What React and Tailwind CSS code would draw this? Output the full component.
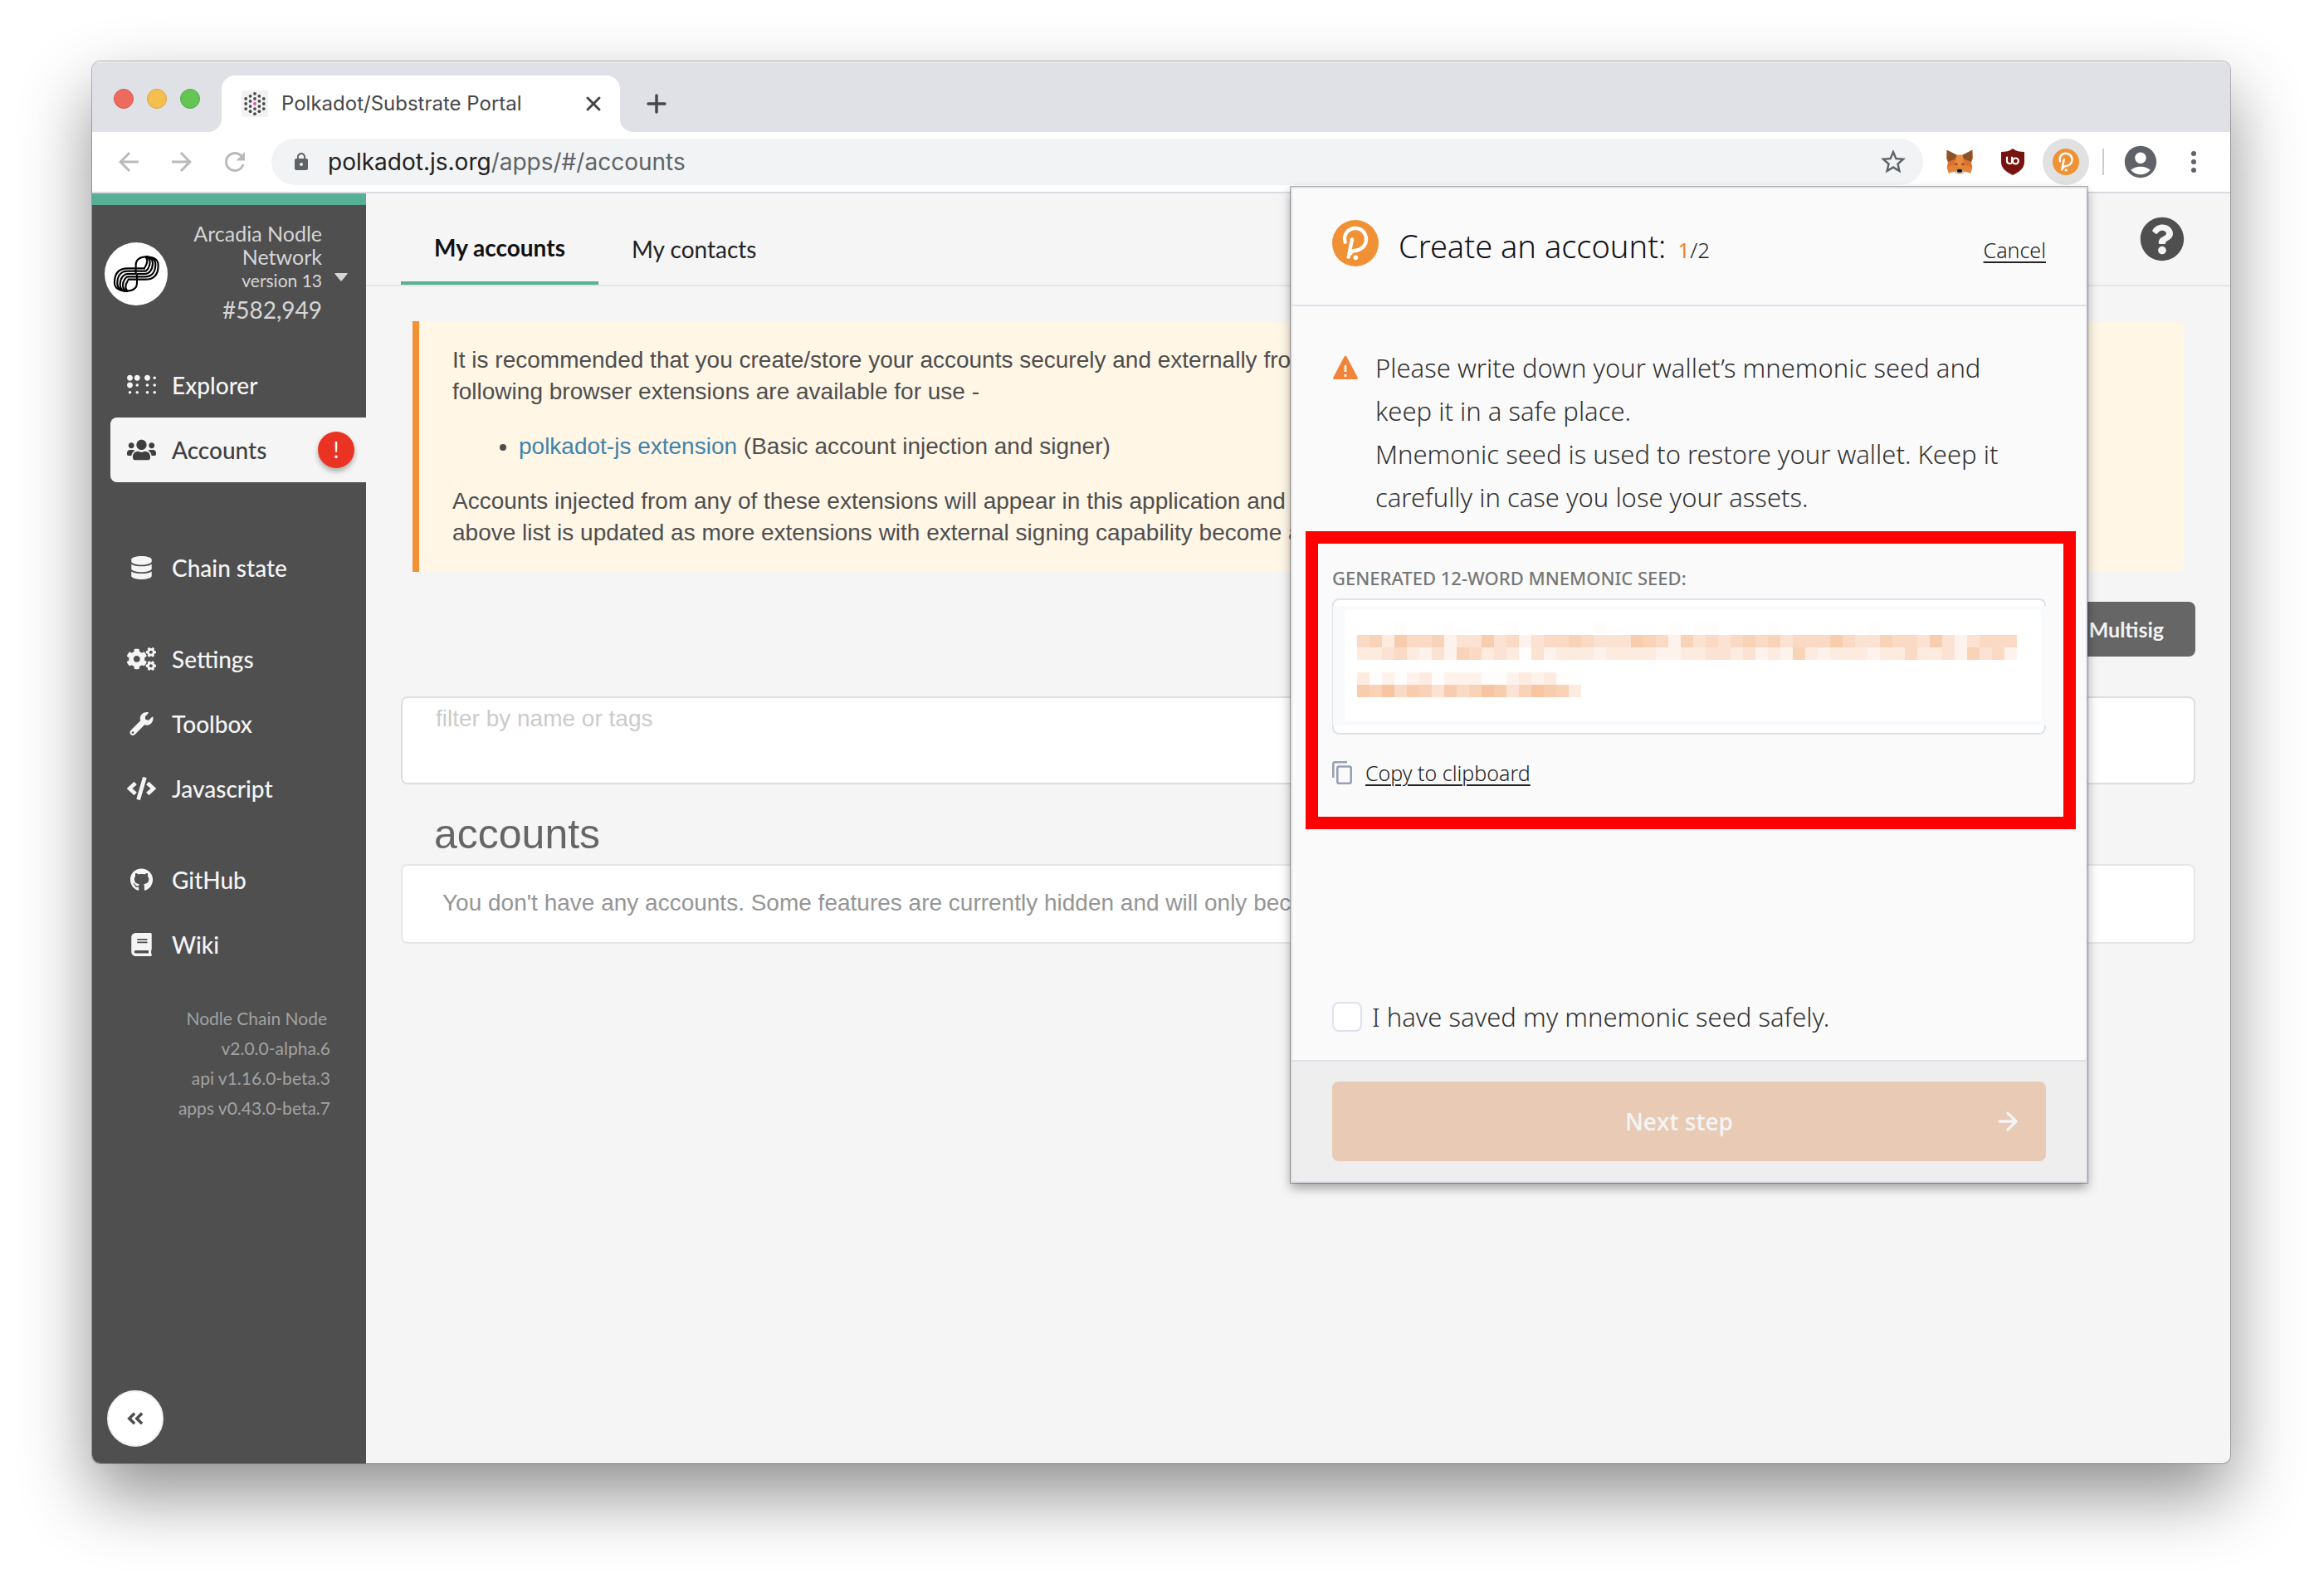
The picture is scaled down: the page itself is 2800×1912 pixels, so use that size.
import React from "react";
import {
  FaBraille,
  FaUsers,
  FaDatabase,
  FaCogs,
  FaWrench,
  FaCode,
  FaGithub,
  FaBook,
  FaQuestionCircle,
  FaPlus,
} from "react-icons/fa";
import { MdArrowBack, MdArrowForward, MdRefresh, MdLock, MdStarBorder, MdAccountCircle } from "react-icons/md";

function PolkadotLogo({ className }) {
  return (
    <svg viewBox="27 27 168 168" className={className} aria-hidden="true">
      <circle cx="111" cy="111" r="84" fill="#f19135" />
      <g fill="none" stroke="#fff" strokeWidth="13" strokeLinecap="round" strokeLinejoin="round">
        <path d="M74 107C66 78 86 57 111 57C134 57 150 75 150 97C150 121 132 136 108 138C100 139 96 141 94 148" />
        <path d="M99 97L86 161" />
      </g>
      <circle cx="112" cy="163" r="8.5" fill="#fff" />
    </svg>
  );
}

const LOOPS = [0, 1, 2, 3, 4].map((i) => {
  const y = 105 + i * 10;
  const x = 48 + i * 10;
  return `M127 ${y}H95C${x + 14} ${y} ${x} ${y + 18 - i * 2} ${x} ${156 + i * 4}C${x} 178 ${x + 14 - i * 2} 187 95 187`;
});

function NodleLogo({ className }) {
  const half = (
    <>
      {LOOPS.map((d) => (
        <path key={d} d={d} />
      ))}
      <path d="M88 187C115 188 129 176 129 158V127" />
    </>
  );
  return (
    <svg viewBox="12 11 228 228" className={className} aria-hidden="true">
      <circle cx="126" cy="125" r="114" fill="#fff" />
      <g fill="none" stroke="#000" strokeWidth="6.4">
        {half}
        <g transform="rotate(180 127 125)">{half}</g>
      </g>
    </svg>
  );
}

function Favicon({ className }) {
  const cols = [3, 4, 5, 4, 3];
  return (
    <svg viewBox="0 0 32 32" className={className} aria-hidden="true">
      <rect width="32" height="32" fill="#f2f2f2" />
      {cols.map((n, c) =>
        Array.from({ length: n }, (_, r) => {
          const centre = c === 2 && r === 2;
          return (
            <circle
              key={`${c}-${r}`}
              cx={16 + (c - 2) * 5.4}
              cy={16 + (r - (n - 1) / 2) * 6.1}
              r={1.9}
              fill={centre ? "#d64ca8" : "#4a4a4a"}
            />
          );
        })
      )}
    </svg>
  );
}

function Fox({ className }) {
  return (
    <svg viewBox="0 0 96 90" className={className} aria-hidden="true">
      <path d="M2 2L38 20H58L94 2L96 32L90 48L94 66L88 86L68 80L58 88H38L28 80L8 86L2 66L6 48L0 32Z" fill="#e5823a" />
      <path d="M2 2L38 20L32 36L6 45L2 30Z" fill="#8b532b" />
      <path d="M94 2L58 20L64 36L90 45L94 30Z" fill="#8b532b" />
      <path d="M38 20H58L60 62H36Z" fill="#ea8d3c" />
      <path d="M6 45L32 36L28 56L4 64Z" fill="#d9722f" />
      <path d="M90 45L64 36L68 56L92 64Z" fill="#d9722f" />
      <path d="M26 52L42 48L40 60Z" fill="#c9612a" />
      <path d="M70 52L54 48L56 60Z" fill="#c9612a" />
      <path d="M30 52L38 53L37 58Z" fill="#2f343c" />
      <path d="M66 52L58 53L59 58Z" fill="#2f343c" />
      <path d="M36 76L30 82L40 89H56L66 82L60 76Z" fill="#d2c4b6" />
      <path d="M41 72H55L58 79L54 83H42L38 79Z" fill="#161616" />
    </svg>
  );
}

function Shield({ className }) {
  return (
    <svg viewBox="0 0 84 96" className={className} aria-hidden="true">
      <path d="M42 0C30 9 16 12 0 12V48C0 72 18 84 42 96C66 84 84 72 84 48V12C68 12 54 9 42 0Z" fill="#78140f" />
      <g fill="none" stroke="#fff" strokeWidth="6.5">
        <path d="M21 29V45C21 55 35 57 39 50V29" />
        <circle cx="52" cy="45" r="10.5" />
      </g>
    </svg>
  );
}

function DoubleChevron({ className }) {
  return (
    <svg viewBox="0 0 24 20" className={className} fill="none" stroke="currentColor" strokeWidth="4" aria-hidden="true">
      <path d="M11 3L4 10L11 17M21 3L14 10L21 17" />
    </svg>
  );
}

const MENU = [
  [
    { label: "Explorer", Icon: FaBraille },
    { label: "Accounts", Icon: FaUsers, active: true },
  ],
  [{ label: "Chain state", Icon: FaDatabase }],
  [
    { label: "Settings", Icon: FaCogs },
    { label: "Toolbox", Icon: FaWrench },
    { label: "Javascript", Icon: FaCode },
  ],
  [
    { label: "GitHub", Icon: FaGithub },
    { label: "Wiki", Icon: FaBook },
  ],
];
const GROUP_GAPS = ["mt-8", "mt-16", "mt-8", "mt-8"];

function Sidebar() {
  return (
    <aside className="flex w-[330px] shrink-0 flex-col border-t-[14px] border-[#55b095] bg-[#4f4f4f] font-[Lato,sans-serif] text-[#f5f5f5]">
      <button type="button" className="mt-5 flex items-center pl-[15px] text-right text-[#d6d6d6]">
        <NodleLogo className="size-[76px] shrink-0" />
        <span className="flex-1 pl-6 text-[25px] leading-7">
          <span className="block">Arcadia Nodle Network</span>
          <span className="block text-[21px] leading-[30px]">version 13</span>
          <span className="block text-[28px] leading-10">#582,949</span>
        </span>
        <svg viewBox="0 0 16 10" className="mt-2 mr-[22px] ml-[15px] h-[10px] w-4" fill="currentColor" aria-hidden="true">
          <path d="M1 0H15Q16 0 15.500 1L9 9Q8 10 7 9L0.500 1Q0 0 1 0Z" />
        </svg>
      </button>
      <nav className="flex flex-col">
        {MENU.map((group, g) => (
          <ul key={g} className={GROUP_GAPS[g]}>
            {group.map(({ label, Icon, active }) => (
              <li key={label} className="pl-[22px]">
                <a
                  href="#/accounts"
                  className={
                    active
                      ? "flex h-[78px] items-center gap-[19px] rounded-l-lg bg-[#f5f5f5] pr-[14px] pl-5 text-[28px] text-[#3f3f3f]"
                      : "flex h-[78px] items-center gap-[19px] pr-[14px] pl-5 text-[28px]"
                  }
                >
                  <Icon className="h-7 w-[35px] shrink-0" />
                  <span className="flex-1 font-medium">{label}</span>
                  {active && (
                    <span className="flex size-11 items-center justify-center rounded-full bg-[#ea3323] text-[26px] text-white shadow-[0_4px_6px_rgba(0,0,0,0.3)]">
                      !
                    </span>
                  )}
                </a>
              </li>
            ))}
          </ul>
        ))}
      </nav>
      <div className="mt-8 pr-[43px] text-right text-[21px] leading-9 text-[#a2a2a2]">
        <p className="pr-1">Nodle Chain Node</p>
        <p>v2.0.0-alpha.6</p>
        <p>api v1.16.0-beta.3</p>
        <p>apps v0.43.0-beta.7</p>
      </div>
      <button
        type="button"
        aria-label="Collapse sidebar"
        className="mt-auto mb-5 ml-[18px] flex size-[68px] items-center justify-center rounded-full border-2 border-[#f0f0f0] bg-white text-[#4f4f4f]"
      >
        <DoubleChevron className="h-[18px] w-[22px]" />
      </button>
    </aside>
  );
}

function TabStrip() {
  return (
    <div className="flex h-[85px] items-end border-t-2 border-[#eaebee] bg-[#dfe1e6]">
      <div className="flex h-[83px] w-[156px] items-center gap-4 pt-0.5 pl-[26px]">
        <button type="button" aria-label="Close" className="size-6 rounded-full border border-[#d8574d] bg-[#ed6a5e]" />
        <button type="button" aria-label="Minimize" className="size-6 rounded-full border border-[#dda43c] bg-[#f5bf4f]" />
        <button type="button" aria-label="Zoom" className="size-6 rounded-full border border-[#52ae3f] bg-[#62c554]" />
      </div>
      <div className="relative flex h-[68px] w-[480px] items-center rounded-t-2xl bg-white pr-[22px] pl-6">
        <span className="absolute bottom-0 -left-4 size-4 bg-white">
          <span className="block size-4 rounded-br-2xl bg-[#dfe1e6]" />
        </span>
        <span className="absolute -right-4 bottom-0 size-4 bg-white">
          <span className="block size-4 rounded-bl-2xl bg-[#dfe1e6]" />
        </span>
        <Favicon className="size-8" />
        <span className="flex-1 pl-4 text-[24px] text-[#45474b]">Polkadot/Substrate Portal</span>
        <button type="button" aria-label="Close tab">
          <svg viewBox="0 0 20 20" className="size-5" stroke="#45474b" strokeWidth="3" strokeLinecap="round" aria-hidden="true">
            <path d="M3 3L17 17M17 3L3 17" />
          </svg>
        </button>
      </div>
      <button type="button" aria-label="New tab" className="flex h-[68px] items-center pl-8">
        <svg viewBox="0 0 24 24" className="size-6" stroke="#45474b" strokeWidth="3.500" strokeLinecap="round" aria-hidden="true">
          <path d="M12 2V22M2 12H22" />
        </svg>
      </button>
    </div>
  );
}

function Toolbar() {
  return (
    <div className="flex h-[74px] items-center border-b-2 border-[#d9dbe1] bg-white">
      <div className="flex items-center gap-7 pl-[26px] text-[#b9babd]">
        <button type="button" aria-label="Back">
          <MdArrowBack className="size-9" />
        </button>
        <button type="button" aria-label="Forward">
          <MdArrowForward className="size-9" />
        </button>
        <button type="button" aria-label="Reload">
          <MdRefresh className="size-9" />
        </button>
      </div>
      <div className="ml-[26px] flex h-14 flex-1 items-center rounded-full bg-[#f1f3f4] pr-[18px] pl-6">
        <MdLock className="size-6 text-[#5f6368]" />
        <p className="flex-1 pl-5 text-[28px] text-[#5f6368]">
          <span className="text-[#202124]">polkadot.js.org</span>/apps/#/accounts
        </p>
        <button type="button" aria-label="Bookmark">
          <MdStarBorder className="size-9 text-[#5f6368]" />
        </button>
      </div>
      <div className="flex items-center pl-7">
        <Fox className="h-[30px] w-8" />
        <Shield className="ml-[34px] h-8 w-7" />
        <button type="button" aria-label="Polkadot extension" className="ml-[22px] flex size-14 items-center justify-center rounded-full bg-[#e1e1e1]">
          <PolkadotLogo className="size-8" />
        </button>
        <span className="ml-4 h-8 w-0.5 bg-[#cccdd0]" />
        <button type="button" aria-label="Profile" className="ml-[21px]">
          <MdAccountCircle className="size-[46px] text-[#5f6368]" />
        </button>
        <button type="button" aria-label="Menu" className="mr-[41px] ml-[38px] flex flex-col gap-1">
          <span className="size-[6px] rounded-full bg-[#5f6368]" />
          <span className="size-[6px] rounded-full bg-[#5f6368]" />
          <span className="size-[6px] rounded-full bg-[#5f6368]" />
        </button>
      </div>
    </div>
  );
}

function AccountsPage() {
  return (
    <main className="min-w-0 flex-1 font-['Liberation_Sans',Arial,sans-serif] text-[28px] leading-[38px]">
      <header className="flex h-28 items-stretch border-b-2 border-[#e5e5e5] pl-[42px] font-[Lato,sans-serif] text-[#222]">
        <a href="#/accounts" className="flex items-center border-b-4 border-[#55b095] px-10 pt-6 font-bold text-[#111]">
          My accounts
        </a>
        <a href="#/contacts" className="flex items-center px-10 pt-6">
          My contacts
        </a>
        <button type="button" aria-label="Help" className="mr-[55px] ml-auto">
          <FaQuestionCircle className="size-[54px] text-[#4f4f4f]" />
        </button>
      </header>
      <div className="px-[42px] pt-[42px]">
        <article className="mx-[14px] flex flex-col gap-7 rounded-r-md border-l-8 border-[#f19135] bg-[#fff6e6] px-10 py-7 text-[#4e4e4e]">
          <p>
            It is recommended that you create/store your accounts securely and externally from the app. On Chrome the
            <br />
            following browser extensions are available for use -
          </p>
          <ul className="list-disc pl-20">
            <li>
              <a href="#extension" className="text-[#4183a9]">
                polkadot-js extension
              </a>{" "}
              (Basic account injection and signer)
            </li>
          </ul>
          <p>
            Accounts injected from any of these extensions will appear in this application and be available for use. The
            <br />
            above list is updated as more extensions with external signing capability become available.
          </p>
        </article>
        <div className="mt-9 flex justify-end">
          <button
            type="button"
            className="flex h-[66px] items-center gap-4 rounded-lg bg-[#666] px-[38px] font-[Lato,sans-serif] text-[25px] font-bold text-[#f5f5f5]"
          >
            <FaPlus className="size-6" />
            Multisig
          </button>
        </div>
        <div className="mt-12 h-[106px] rounded-lg border-2 border-[#dedede] bg-white px-10 pt-[6px]">
          <input
            type="text"
            aria-label="filter by name or tags"
            placeholder="filter by name or tags"
            className="block w-full bg-transparent text-[28px] leading-[38px] outline-none placeholder:text-[#cbcbcb]"
          />
        </div>
        <h1 className="mt-[30px] mb-[6px] pl-10 text-[50px] leading-[60px] text-[#666]">accounts</h1>
        <p className="rounded-lg border-2 border-[#e6e6e6] bg-white px-12 pt-[26px] pb-7 text-[#959595]">
          You don't have any accounts. Some features are currently hidden and will only become available once you have accounts.
        </p>
      </div>
    </main>
  );
}

/* Obscured seed phrase: one letter per cell, a = lightest, h = strongest; "." is blank. */
const SHADES = { a: "#fffdfb", b: "#fef2ec", c: "#fdebe0", d: "#fbe2d2", e: "#fadac4", f: "#f9d3b8", g: "#f8cdae", h: "#f8c5a2" };
const MOSAIC = [
  "...a...a....a......a.....a.aa....a.......a...........",
  "efcgeefbddgdebdeefedddgfebfdedefefdeeegeddfeedgdbdeee",
  "ccdecbdbfecdcadbcccbccccbbccddcdbcbfcbcccbcceccdbfdeb",
  "",
  "cababcabbbaabcbca.",
  "gfhegfdgefhgdfhgfc",
];

function SeedMosaic({ className }) {
  return (
    <svg viewBox="0 0 795 90" className={className} role="img" aria-label="Mnemonic seed, obscured" shapeRendering="crispEdges">
      {MOSAIC.map((row, y) =>
        [...row].map((k, x) =>
          SHADES[k] ? <rect key={`${x}-${y}`} x={x * 15} y={y * 15} width="15" height="15" fill={SHADES[k]} /> : null
        )
      )}
    </svg>
  );
}

function ExtensionPopup() {
  return (
    <section
      aria-label="Create an account"
      className="absolute top-[151px] right-[172px] flex h-[1200px] w-[960px] flex-col border-2 border-[#dfe1ea] bg-[#fafafa] font-['Noto_Sans','Open_Sans',sans-serif] font-light text-[#222] shadow-[0_0_0_1px_rgba(0,0,0,0.3),0_6px_12px_rgba(0,0,0,0.35)]"
    >
      <header className="flex h-[142px] shrink-0 items-start gap-6 border-b-2 border-[#dfe1ea] px-12 pt-[38px]">
        <PolkadotLogo className="size-14 shrink-0" />
        <div className="flex flex-1 items-baseline gap-[14px] leading-[62px]">
          <h2 className="text-[38px] text-[#111216]">Create an account:</h2>
          <p className="text-[26px]">
            <span className="font-normal text-[#f1843a]">1</span>/2
          </p>
          <a href="#cancel" className="ml-auto text-[25px] underline decoration-2 underline-offset-4">
            Cancel
          </a>
        </div>
      </header>
      <div className="flex flex-1 flex-col">
        <div className="flex gap-5 pt-12 pr-12 pl-12 text-[31px] leading-[52px] text-[#333]">
          <svg viewBox="0 0 32 30" className="mt-[11px] h-[30px] w-8 shrink-0" aria-hidden="true">
            <path d="M14.400 2Q16 -0.500 17.600 2L30.600 26.500Q31.600 29 29 29H3Q0.400 29 1.400 26.500Z" fill="#f1843a" />
            <path d="M16 12V20M16 23V26" stroke="#fff" strokeWidth="2.600" />
          </svg>
          <p className="max-w-[770px]">
            Please write down your wallet’s mnemonic seed and keep it in a safe place.
            <br />
            Mnemonic seed is used to restore your wallet. Keep it carefully in case you lose your assets.
          </p>
        </div>
        <div className="mt-[15px] mr-3 ml-4 border-[15px] border-[#ff0000] pt-[26px] pr-[21px] pb-[35px] pl-[17px]">
          <h3 className="text-[22px] leading-[30px] font-medium text-[#777]">GENERATED 12-WORD MNEMONIC SEED:</h3>
          <div className="relative mt-[10px] h-[164px] rounded-lg border-2 border-[#dfe1ec] bg-white">
            <div className="absolute -right-[10px] -left-px top-[7px] h-[144px] border-x-[14px] border-y-[5px] border-[#f9fafc] bg-white pt-[15px] pl-[15px]">
              <SeedMosaic className="block h-[90px] w-[795px]" />
            </div>
          </div>
          <button type="button" className="mt-7 flex items-start gap-4">
            <svg viewBox="0 0 24 28" className="mt-1 h-7 w-6" fill="none" stroke="#98a0b8" strokeWidth="2.600" aria-hidden="true">
              <path d="M1.300 20V3.500Q1.300 1.300 3.500 1.300H18" />
              <rect x="6.300" y="6.500" width="16.400" height="20.200" rx="2" />
            </svg>
            <span className="text-[25px] leading-9 underline decoration-2 underline-offset-4">Copy to clipboard</span>
          </button>
        </div>
        <label className="mt-auto mb-[26px] ml-12 flex items-center gap-3 text-[31px] leading-[52px] text-[#333]">
          <input type="checkbox" className="size-9 appearance-none rounded-lg border-2 border-[#dfe1ec] bg-white" />
          I have saved my mnemonic seed safely.
        </label>
      </div>
      <footer className="border-t-2 border-[#dfe1ea] bg-[#eeeeee] px-12 py-6">
        <button
          type="button"
          disabled
          className="flex h-24 w-full items-center rounded-lg bg-[#e8cab5] px-[34px] font-['Open_Sans',sans-serif] text-[28px] font-semibold text-[#f4f4f4]"
        >
          <span className="flex-1">Next step</span>
          <svg viewBox="0 0 24 24" className="size-6" fill="none" stroke="currentColor" strokeWidth="3.400" strokeLinecap="round" strokeLinejoin="round" aria-hidden="true">
            <path d="M2 12H22M12 2L22 12L12 22" />
          </svg>
        </button>
      </footer>
    </section>
  );
}

export default function App() {
  return (
    <div className="flex min-h-screen bg-white pt-[74px] pr-[113px] pb-[149px] pl-[111px] font-[Inter,sans-serif]">
      <div className="relative flex flex-1 flex-col rounded-[10px] shadow-[0_0_0_1px_rgba(0,0,0,0.25),0_38px_84px_rgba(0,0,0,0.44)]">
        <div className="flex flex-1 flex-col overflow-hidden rounded-[10px] bg-[#f5f5f5]">
          <TabStrip />
          <Toolbar />
          <div className="flex flex-1">
            <Sidebar />
            <AccountsPage />
          </div>
        </div>
        <ExtensionPopup />
      </div>
    </div>
  );
}
